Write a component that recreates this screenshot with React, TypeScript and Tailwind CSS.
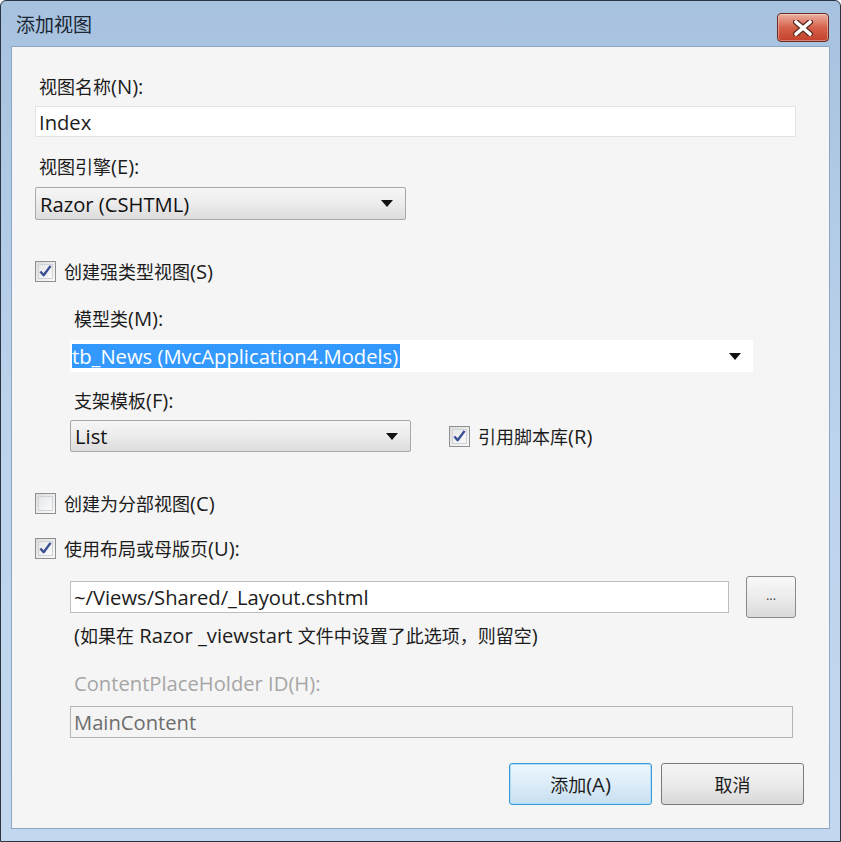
import React from "react"

const font = "font-['Open_Sans','Noto_Sans_CJK_SC',sans-serif]"

// CJK runs are drawn a little smaller than the Latin ones, as YaHei + Segoe UI do
function T({ children }: { children: string }) {
  const parts = children.split(/([\u3000-\u9fff\uff00-\uffef]+)/)
  return (
    <>
      {parts.map((p, i) =>
        /[\u3000-\u9fff\uff00-\uffef]/.test(p) ? (
          <span key={i} className="font-['Noto_Sans_CJK_SC',sans-serif] text-[18px]">
            {p}
          </span>
        ) : (
          <span key={i}>{p}</span>
        )
      )}
    </>
  )
}

function Arrow() {
  return (
    <svg width="12" height="7" viewBox="0 0 12 7" className="shrink-0">
      <path d="M0 0 H12 L6 7 Z" fill="#111" />
    </svg>
  )
}

function Check({ checked }: { checked: boolean }) {
  return (
    <div className="flex size-[21px] shrink-0 items-center justify-center border border-[#8e8f8f] bg-gradient-to-br from-[#dcdcdc] to-[#fbfbfb] p-[2px]">
      <div className="flex size-full items-center justify-center border border-[#d0d3d6] bg-gradient-to-br from-[#e6e8ea] to-[#fafafa]">
        {checked && (
          <svg width="14" height="14" viewBox="0 0 14 14">
            <path d="M1.5 7.5 L5 11.5 L12.5 1.5" fill="none" stroke="#3c4f94" strokeWidth="2.6" strokeLinejoin="round" />
          </svg>
        )}
      </div>
    </div>
  )
}

function Combo({ label, className }: { label: string; className: string }) {
  return (
    <div
      className={`flex items-center justify-between rounded-[2px] border border-[#a8a8a8] bg-gradient-to-b from-[#f6f6f6] via-[#ececec] to-[#dcdcdc] pl-[4px] pr-[12px] text-[#111] ${className}`}
    >
      <span>{label}</span>
      <Arrow />
    </div>
  )
}

export default function App() {
  return (
    <div className={`h-[842px] w-[841px] bg-white ${font}`}>
      <div className="flex h-full w-full flex-col rounded-t-[6px] border border-[#2b3440] bg-gradient-to-b from-[#a7c2df] via-[#bcd3ec] to-[#c3d8ee] px-[10px]">
        {/* title bar */}
        <div className="flex h-[45px] shrink-0 items-center justify-between">
          <span className="pl-[5px] pt-[2px] font-['Noto_Sans_CJK_SC',sans-serif] text-[19px] text-[#1b2633]">添加视图</span>
          <div className="mr-[1px] mt-[8px] flex h-[29px] w-[52px] items-center justify-center rounded-[4px] border border-[#6b2a1e] bg-gradient-to-b from-[#eab0a2] via-[#d5614a] to-[#c3402a] shadow-[inset_0_0_0_1px_rgba(255,255,255,0.35)]">
            <svg width="20" height="16" viewBox="0 0 20 16">
              <path d="M3 2 L17 14 M17 2 L3 14" stroke="#5a2a22" strokeWidth="6" strokeLinecap="round" />
              <path d="M3 2 L17 14 M17 2 L3 14" stroke="#fff" strokeWidth="3.6" strokeLinecap="round" />
            </svg>
          </div>
        </div>

        {/* client area */}
        <div className="flex h-[783px] shrink-0 flex-col border border-[#8aa6c4] bg-[#f5f5f5] pl-[23px] pr-[33px] text-[20.2px] leading-[24px] text-[#1c1c1c]">
          <div className="mt-[27px] h-[24px] pl-[4px]">
            <T>视图名称(N):</T>
          </div>
          <div className="mt-[8px] flex h-[31px] items-center border border-[#e3e3e3] bg-white pl-[3px]">Index</div>

          <div className="mt-[17px] h-[24px] pl-[4px]">
            <T>视图引擎(E):</T>
          </div>
          <Combo label="Razor (CSHTML)" className="mt-[9px] h-[33px] w-[371px]" />

          <div className="mt-[40px] flex h-[22px] items-center gap-[8px]">
            <Check checked />
            <span>
              <T>创建强类型视图(S)</T>
            </span>
          </div>

          <div className="pl-[35px]">
            <div className="mt-[24px] h-[24px] pl-[4px]">
              <T>模型类(M):</T>
            </div>
            <div className="mt-[10px] flex h-[32px] w-[683px] items-center justify-between bg-white pl-[2px] pr-[12px]">
              <span className="bg-[#3399ff] pr-[2px] text-white">tb_News (MvcApplication4.Models)</span>
              <Arrow />
            </div>

            <div className="mt-[16px] h-[24px] pl-[4px]">
              <T>支架模板(F):</T>
            </div>
            <div className="mt-[8px] flex items-center">
              <Combo label="List" className="h-[32px] w-[341px]" />
              <div className="ml-[38px] flex items-center gap-[8px]">
                <Check checked />
                <span>
                  <T>引用脚本库(R)</T>
                </span>
              </div>
            </div>
          </div>

          <div className="mt-[40px] flex h-[22px] items-center gap-[8px]">
            <Check checked={false} />
            <span>
              <T>创建为分部视图(C)</T>
            </span>
          </div>

          <div className="mt-[23px] flex h-[22px] items-center gap-[8px]">
            <Check checked />
            <span>
              <T>使用布局或母版页(U):</T>
            </span>
          </div>

          <div className="pl-[35px]">
            <div className="mt-[17px] flex h-[42px] items-center gap-[17px]">
              <div className="flex h-[32px] w-[659px] items-center border border-[#bdbdbd] bg-white pl-[3px]">~/Views/Shared/_Layout.cshtml</div>
              <div className="flex h-[42px] w-[50px] items-center justify-center rounded-[3px] border border-[#8a8a8a] bg-gradient-to-b from-[#f8f8f8] via-[#ececec] to-[#d9d9d9] pb-[4px] text-[13px] text-[#444]">
                ...
              </div>
            </div>

            <div className="mt-[5px] h-[24px] pl-[4px]">
              <T>(如果在 Razor _viewstart 文件中设置了此选项，则留空)</T>
            </div>

            <div className="mt-[24px] h-[24px] pl-[4px] text-[#a6a6a6]">ContentPlaceHolder ID(H):</div>
            <div className="mt-[11px] flex h-[32px] w-[723px] items-center border border-[#b5b5b5] bg-[#f4f4f4] pl-[3px] text-[#6d6d6d]">MainContent</div>
          </div>

          <div className="mt-[25px] flex justify-end gap-[9px]">
            <button className="flex h-[42px] w-[143px] items-center justify-center rounded-[3px] border border-[#3d9ad6] bg-gradient-to-b from-[#eef7fd] via-[#dcecf8] to-[#c7dff0] text-[#1c1c1c] shadow-[inset_0_0_0_1px_#a9dcf7]">
              <T>添加(A)</T>
            </button>
            <button className="mr-[-8px] flex h-[42px] w-[143px] items-center justify-center rounded-[3px] border border-[#7a7a7a] bg-gradient-to-b from-[#f4f4f4] via-[#ebebeb] to-[#d8d8d8] text-[#1c1c1c]">
              <T>取消</T>
            </button>
          </div>
        </div>
      </div>
    </div>
  )
}
